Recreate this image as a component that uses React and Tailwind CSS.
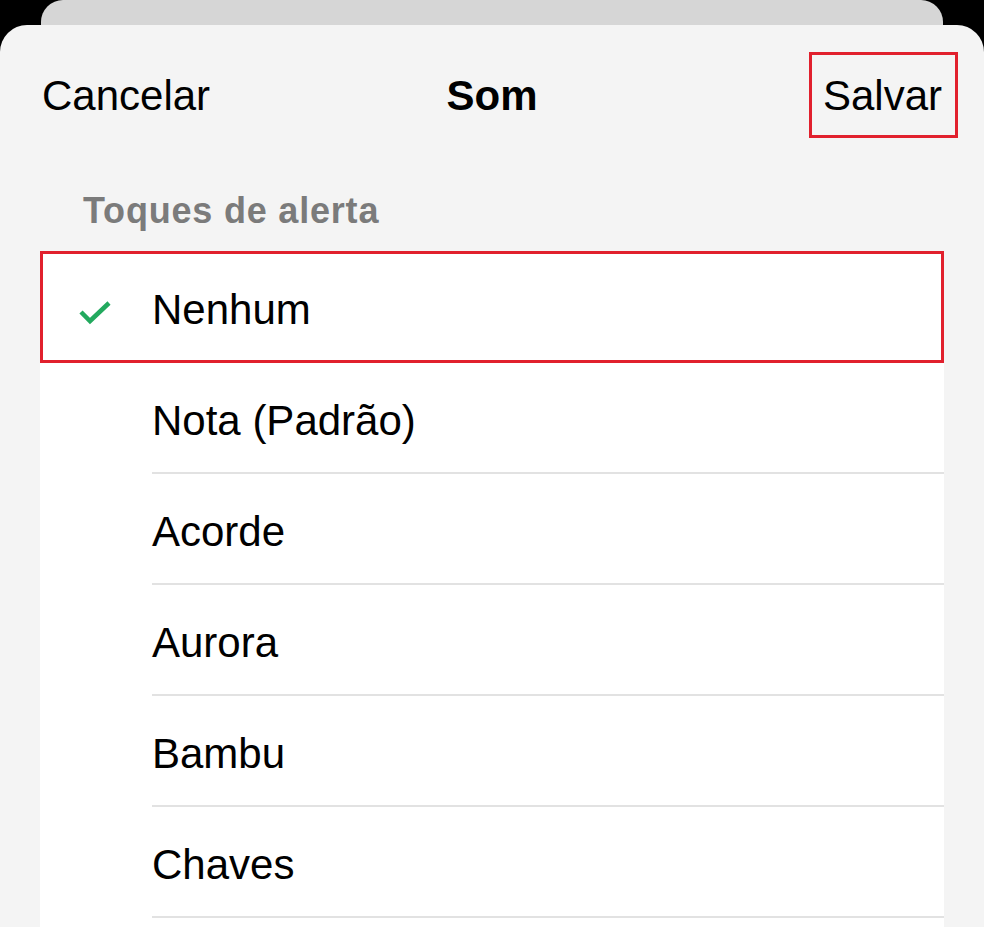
import React from "react";

const items = ["Nenhum", "Nota (Padrão)", "Acorde", "Aurora", "Bambu", "Chaves"];

export default function App() {
  return (
    <div
      className="w-[984px] h-[927px] bg-black overflow-hidden flex flex-col"
      style={{ fontFamily: '"Liberation Sans", Arial, sans-serif' }}
    >
      <div className="mx-[41px] h-[50px] shrink-0 rounded-t-[22px] bg-[#d6d6d6]" />
      <div className="-mt-[25px] flex-1 rounded-t-[27px] bg-[#f4f4f4] flex flex-col">
        <div className="h-[142px] shrink-0 grid grid-cols-[1fr_auto_1fr] items-center px-[42px] text-[42px] leading-none text-black">
          <span className="justify-self-start">Cancelar</span>
          <span className="font-bold">Som</span>
          <span className="relative justify-self-end">
            Salvar
            <span className="absolute -left-[14px] -right-[16px] -top-[23px] -bottom-[21px] border-[3px] border-[#e1202d]" />
          </span>
        </div>
        <div className="h-[85px] shrink-0 flex items-center pl-[83px] pt-[2px] text-[36px] tracking-[0.8px] leading-none font-bold text-[#7b7b7b]">
          Toques de alerta
        </div>
        <div className="mx-[40px] flex-1 bg-white flex flex-col">
          {items.map((name, i) => (
            <div key={name} className="relative h-[111px] shrink-0 flex">
              <div className="w-[112px] shrink-0 flex items-center justify-center pt-[6px]">
                {i === 0 && (
                  <svg width="36" height="28" viewBox="0 0 36 28">
                    <path d="M3 15 L12 24 L31 6" fill="none" stroke="#22a95e" strokeWidth="4.5" strokeLinecap="butt" strokeLinejoin="miter" />
                  </svg>
                )}
              </div>
              <div className="flex-1 flex items-center pt-[6px] border-b-2 border-[#e2e2e2] text-[42px] leading-none text-black">
                {name}
              </div>
              {i === 0 && (
                <div className="absolute inset-0 -top-[1px] border-[3px] border-[#e1202d]" />
              )}
            </div>
          ))}
        </div>
      </div>
    </div>
  );
}
